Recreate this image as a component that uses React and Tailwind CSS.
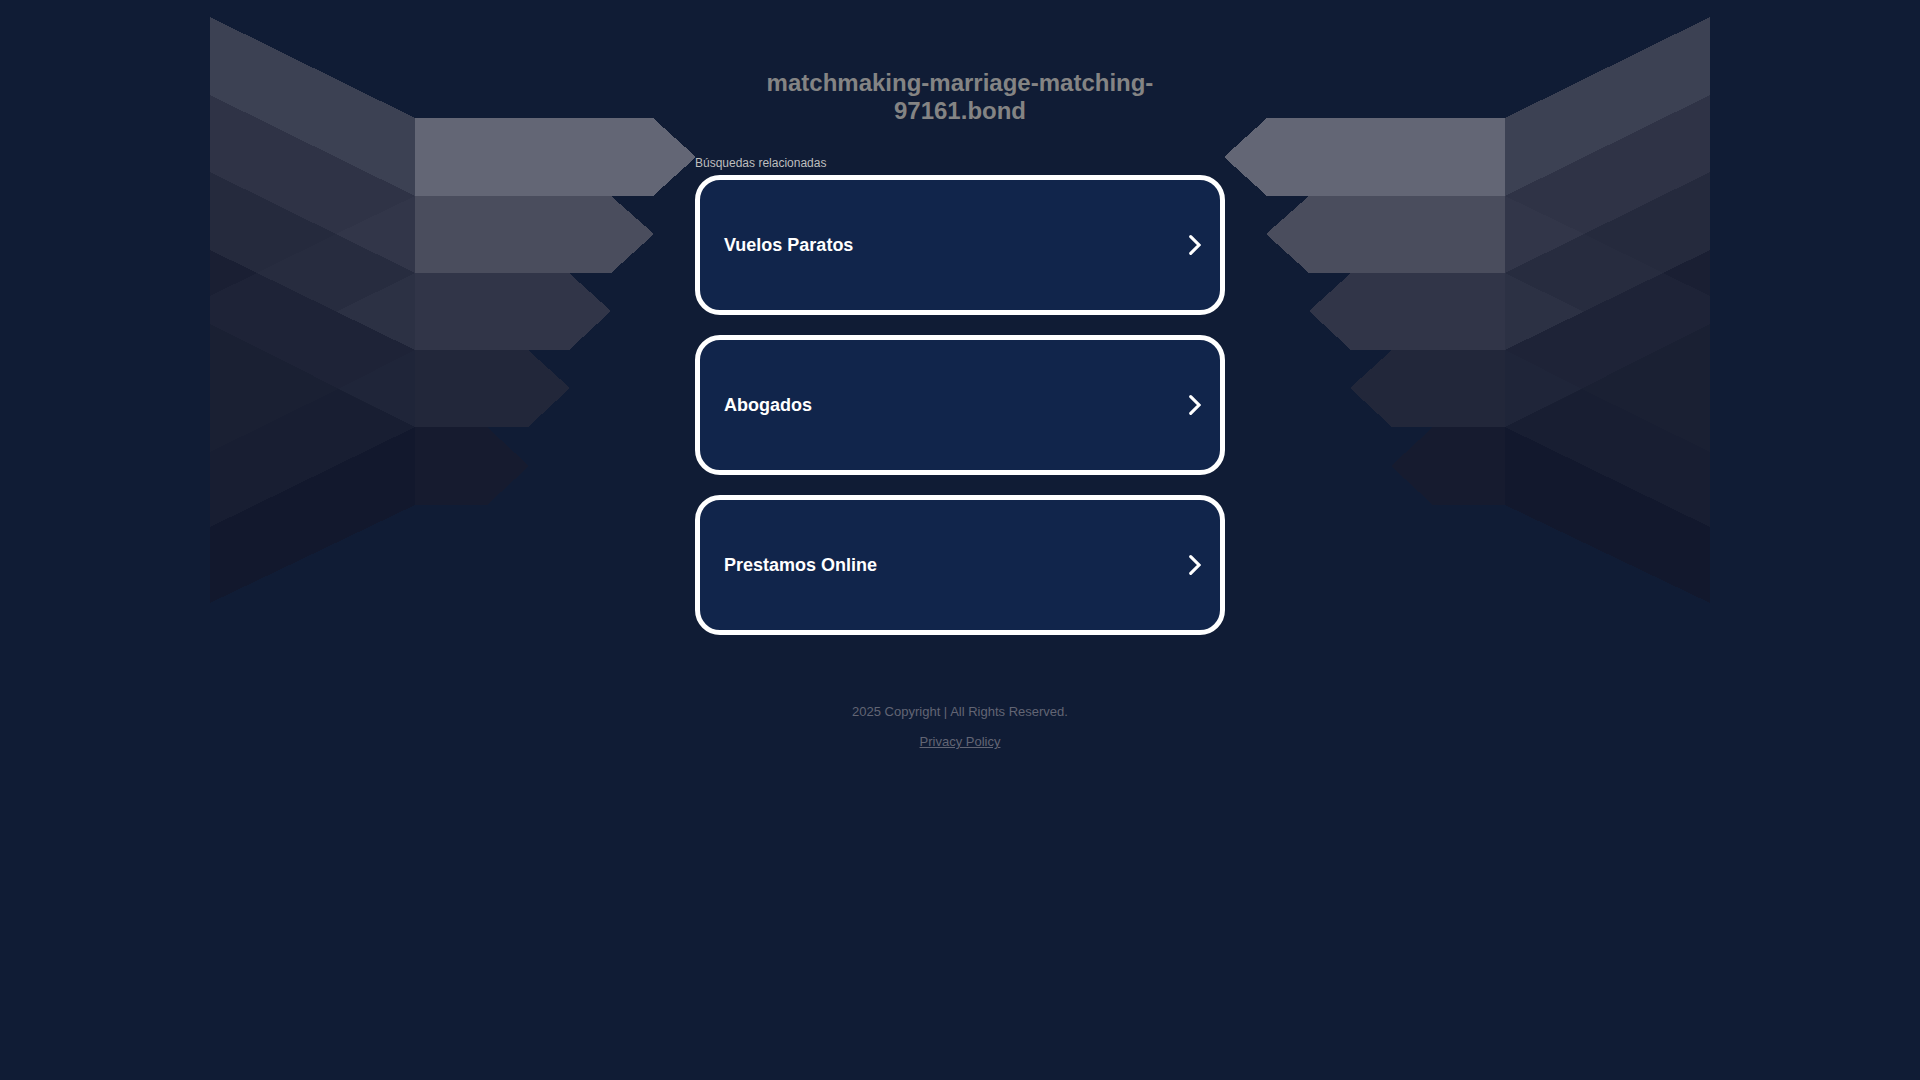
const searches = ["Vuelos Paratos", "Abogados", "Prestamos Online"];

const arrows = [
    { points: "205,118 443,118 486,157 443,196 205,196", fill: "#636675" },
    { points: "205,196 401,196 444,234 401,273 205,273", fill: "#4a4d5d" },
    { points: "205,273 359,273 401,311 359,350 205,350", fill: "#313548" },
    { points: "205,350 318,350 360,388 318,427 205,427", fill: "#22273a" },
    { points: "205,427 277,427 319,466 277,505 205,505", fill: "#161b2f" },
];

// Painted back to front, every band covers the lower part of the one before
const folds = [
    { points: "0,17 205,118 205,505 0,603", fill: "#3c4153" },
    { points: "0,95 205,196 205,505 0,603", fill: "#2f3346" },
    { points: "205,196 126,234 205,273", fill: "#323649" },
    { points: "0,172 205,273 205,505 0,603", fill: "#252a3d" },
    { points: "126,234 205,273 126,312 47,273", fill: "#272c3f" },
    { points: "205,273 205,350 126,312", fill: "#2c3144" },
    { points: "0,250 205,350 205,505 0,603", fill: "#1e2337" },
    { points: "0,250 47,273 0,296", fill: "#1a1f33" },
    { points: "205,350 205,427 128,389", fill: "#1f2539" },
    { points: "0,324 205,427 205,505 0,603", fill: "#1a2033" },
    { points: "0,452 128,389 205,427 205,505 0,603", fill: "#181e32" },
    { points: "0,527 205,427 205,505 0,603", fill: "#12182d" },
];

const Wing = () => (
    <g>
        {folds.map((shape) => (
            <polygon key={shape.points} points={shape.points} fill={shape.fill} />
        ))}
        {arrows.map((shape) => (
            <polygon key={shape.points} points={shape.points} fill={shape.fill} />
        ))}
    </g>
);

const Backdrop = () => (
    <svg
        className="absolute top-0 left-1/2 w-[1500px] max-w-none -translate-x-1/2"
        viewBox="0 0 1500 620"
        shapeRendering="crispEdges"
        aria-hidden="true"
    >
        <Wing />
        <g transform="translate(1500 0) scale(-1 1)">
            <Wing />
        </g>
    </svg>
);

const Chevron = () => (
    <svg className="h-5 w-3" viewBox="0 0 12 20" fill="none" aria-hidden="true">
        <path
            d="M1.7 1.7 10 10l-8.3 8.3"
            stroke="white"
            strokeWidth="3.1"
            strokeLinecap="round"
        />
    </svg>
);

const App = () => {
    return (
        <div className="relative min-h-screen overflow-hidden bg-[#101c35] font-['Liberation_Sans',Arial,sans-serif]">
            <Backdrop />
            <div className="relative mx-auto max-w-[530px]">
                <header className="flex justify-center pt-[69px]">
                    <h1 className="max-w-[424px] text-center text-2xl/[28px] font-bold text-[#848484]">
                        matchmaking-marriage-matching-97161.bond
                    </h1>
                </header>

                <main className="pt-[30px]">
                    <p className="mb-1 text-xs text-[#bfbfbf]">Búsquedas relacionadas</p>
                    <ul className="flex flex-col gap-5">
                        {searches.map((search) => (
                            <li key={search}>
                                <a
                                    href="#"
                                    className="flex h-[140px] items-center justify-between rounded-[25px] border-5 border-white bg-[#11254b] pr-[19px] pl-6 text-lg font-bold text-white"
                                >
                                    {search}
                                    <Chevron />
                                </a>
                            </li>
                        ))}
                    </ul>
                </main>

                <footer className="flex flex-col items-center gap-[10px] pt-[67px] pb-8 text-[13px]/[20px] text-[#626574]">
                    <p>2025 Copyright | All Rights Reserved.</p>
                    <a href="#" className="underline">Privacy Policy</a>
                </footer>
            </div>
        </div>
    );
};

export default App;
